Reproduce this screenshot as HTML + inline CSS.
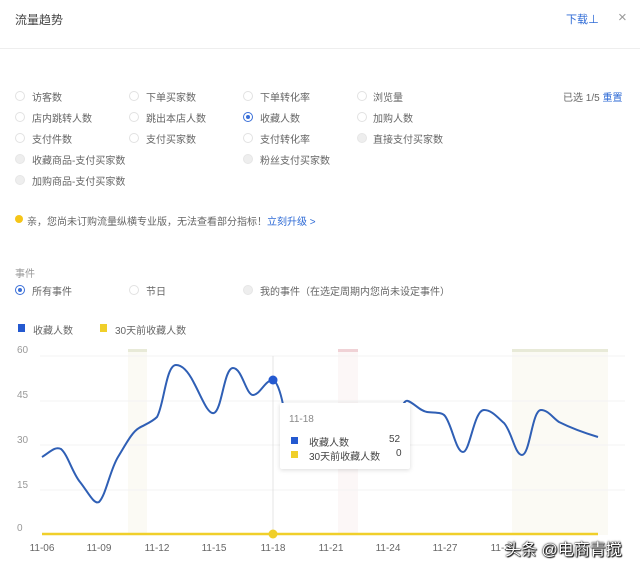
<!DOCTYPE html>
<html><head><meta charset="utf-8"><style>
*{margin:0;padding:0;box-sizing:border-box}
body{width:640px;height:569px;background:#fff;font-family:"Liberation Sans","Noto Sans CJK SC",sans-serif;font-size:10px;color:#666;position:relative;overflow:hidden}
.a{position:absolute;white-space:nowrap}
.r{position:absolute;width:10px;height:10px;border-radius:50%;border:1px solid #e2e2e2;background:#fff}
.r.d{background:#eee;border-color:#e6e6e6}
.r.s{border-color:#3a6fd8}
.r.s::after{content:"";position:absolute;left:2px;top:2px;width:4px;height:4px;border-radius:50%;background:#3a6fd8}
.blue{color:#2f6bd6}
</style></head><body>
<div class="a" style="left:15px;top:11px;font-size:12px;color:#444">流量趋势</div>
<div class="a blue" style="left:566px;top:11px;font-size:11px">下载⊥</div>
<div class="a" style="left:618px;top:9px;font-size:15px;color:#999">×</div>
<div class="a" style="left:0;top:48px;width:640px;height:1px;background:#eee"></div>

<div class="r" style="left:15px;top:91px"></div><div class="a" style="left:32px;top:89px">访客数</div>
<div class="r" style="left:129px;top:91px"></div><div class="a" style="left:146px;top:89px">下单买家数</div>
<div class="r" style="left:243px;top:91px"></div><div class="a" style="left:260px;top:89px">下单转化率</div>
<div class="r" style="left:357px;top:91px"></div><div class="a" style="left:373px;top:89px">浏览量</div>
<div class="a" style="left:563px;top:89px">已选 1/5 <span class="blue">重置</span></div>

<div class="r" style="left:15px;top:112px"></div><div class="a" style="left:32px;top:110px">店内跳转人数</div>
<div class="r" style="left:129px;top:112px"></div><div class="a" style="left:146px;top:110px">跳出本店人数</div>
<div class="r s" style="left:243px;top:112px"></div><div class="a" style="left:260px;top:110px">收藏人数</div>
<div class="r" style="left:357px;top:112px"></div><div class="a" style="left:373px;top:110px">加购人数</div>

<div class="r" style="left:15px;top:133px"></div><div class="a" style="left:32px;top:131px">支付件数</div>
<div class="r" style="left:129px;top:133px"></div><div class="a" style="left:146px;top:131px">支付买家数</div>
<div class="r" style="left:243px;top:133px"></div><div class="a" style="left:260px;top:131px">支付转化率</div>
<div class="r d" style="left:357px;top:133px"></div><div class="a" style="left:373px;top:131px">直接支付买家数</div>

<div class="r d" style="left:15px;top:154px"></div><div class="a" style="left:32px;top:152px">收藏商品-支付买家数</div>
<div class="r d" style="left:243px;top:154px"></div><div class="a" style="left:260px;top:152px">粉丝支付买家数</div>
<div class="r d" style="left:15px;top:175px"></div><div class="a" style="left:32px;top:173px">加购商品-支付买家数</div>

<div class="a" style="left:15px;top:215px;width:8px;height:8px;border-radius:50%;background:#f5c518"></div>
<div class="a" style="left:27px;top:213px">亲，您尚未订购流量纵横专业版，无法查看部分指标！<span class="blue">立刻升级 &gt;</span></div>

<div class="a" style="left:15px;top:265px;color:#999">事件</div>
<div class="r s" style="left:15px;top:285px"></div><div class="a" style="left:32px;top:283px">所有事件</div>
<div class="r" style="left:129px;top:285px"></div><div class="a" style="left:146px;top:283px">节日</div>
<div class="r d" style="left:243px;top:285px"></div><div class="a" style="left:260px;top:283px">我的事件（在选定周期内您尚未设定事件）</div>

<div class="a" style="left:18px;top:324px;width:7px;height:8px;background:#2459d0"></div><div class="a" style="left:33px;top:322px">收藏人数</div>
<div class="a" style="left:100px;top:324px;width:7px;height:8px;background:#f0cf2a"></div><div class="a" style="left:115px;top:322px">30天前收藏人数</div>

<svg class="a" style="left:0;top:340px" width="640" height="229" viewBox="0 340 640 229">
<rect x="128" y="350" width="19" height="185" fill="#fbfaf4"/>
<rect x="128" y="349" width="19" height="3" fill="#e8ead8"/>
<rect x="338" y="350" width="20" height="185" fill="#fcf7f7"/>
<rect x="338" y="349" width="20" height="3" fill="#f0d2d6"/>
<rect x="512" y="350" width="96" height="185" fill="#fbfaf4"/>
<rect x="512" y="349" width="96" height="3" fill="#e8ead8"/>
<g stroke="#f3f3f3" stroke-width="1">
<line x1="40" y1="356" x2="625" y2="356"/><line x1="40" y1="401" x2="625" y2="401"/><line x1="40" y1="445" x2="625" y2="445"/><line x1="40" y1="490" x2="625" y2="490"/>
</g>
<g fill="#999" font-size="10" font-family="Liberation Sans,sans-serif">
<text x="17" y="353">60</text><text x="17" y="398">45</text><text x="17" y="443">30</text><text x="17" y="488">15</text><text x="17" y="531">0</text>
</g>
<line x1="273" y1="356" x2="273" y2="534" stroke="#e4e4e4"/>
<path d="M42,457 C50,452 55,446 61,449 C68,455 72,472 80,482 C88,492 94,505 99,502 C106,495 110,470 118,457 C126,444 132,432 139,428 C146,424 152,422 157,417 C164,405 166,365 176,365 C184,365 190,375 194,383 C202,398 208,415 214,413 C222,410 224,368 233,368 C242,368 246,395 253,395 C260,395 265,380 273,380 C278,382 282,398 284,410" fill="none" stroke="#2f5fb5" stroke-width="2"/>
<path d="M402,407 C404,402 406,400 408,401 C414,403 420,411 427,412 C435,413 442,412 445,416 C452,425 456,452 463,452 C470,452 474,410 484,410 C492,410 498,418 504,423 C512,432 515,455 522,455 C530,455 532,410 541,410 C548,410 553,418 559,422 C575,430 588,434 598,437" fill="none" stroke="#2f5fb5" stroke-width="2"/>
<circle cx="273" cy="380" r="4.5" fill="#2459d0"/>
<line x1="42" y1="534" x2="598" y2="534" stroke="#f0cf2a" stroke-width="2.5"/>
<circle cx="273" cy="534" r="4.5" fill="#f0cf2a"/>
<g fill="#666" font-size="10" font-family="Liberation Sans,sans-serif" text-anchor="middle">
<text x="42" y="551">11-06</text><text x="99" y="551">11-09</text><text x="157" y="551">11-12</text><text x="214" y="551">11-15</text><text x="273" y="551">11-18</text><text x="331" y="551">11-21</text><text x="388" y="551">11-24</text><text x="445" y="551">11-27</text><text x="503" y="551">11-30</text>
</g>
</svg>

<div class="a" style="left:280px;top:403px;width:130px;height:66px;background:#fff;box-shadow:0 1px 5px rgba(0,0,0,0.15);border-radius:2px"></div>
<div class="a" style="left:289px;top:414px;color:#888">11-18</div>
<div class="a" style="left:291px;top:437px;width:7px;height:7px;background:#2459d0"></div>
<div class="a" style="left:309px;top:434px;color:#444">收藏人数</div>
<div class="a" style="left:389px;top:434px;color:#444">52</div>
<div class="a" style="left:291px;top:451px;width:7px;height:7px;background:#f0cf2a"></div>
<div class="a" style="left:309px;top:448px;color:#444">30天前收藏人数</div>
<div class="a" style="left:396px;top:448px;color:#444">0</div>

<div class="a" style="left:505px;top:536px;font-size:16px;color:#fff;text-shadow:0 0 2px #000,0 0 1px #000,1px 1px 1px #000">头条 @电商青搅</div>
</body></html>
